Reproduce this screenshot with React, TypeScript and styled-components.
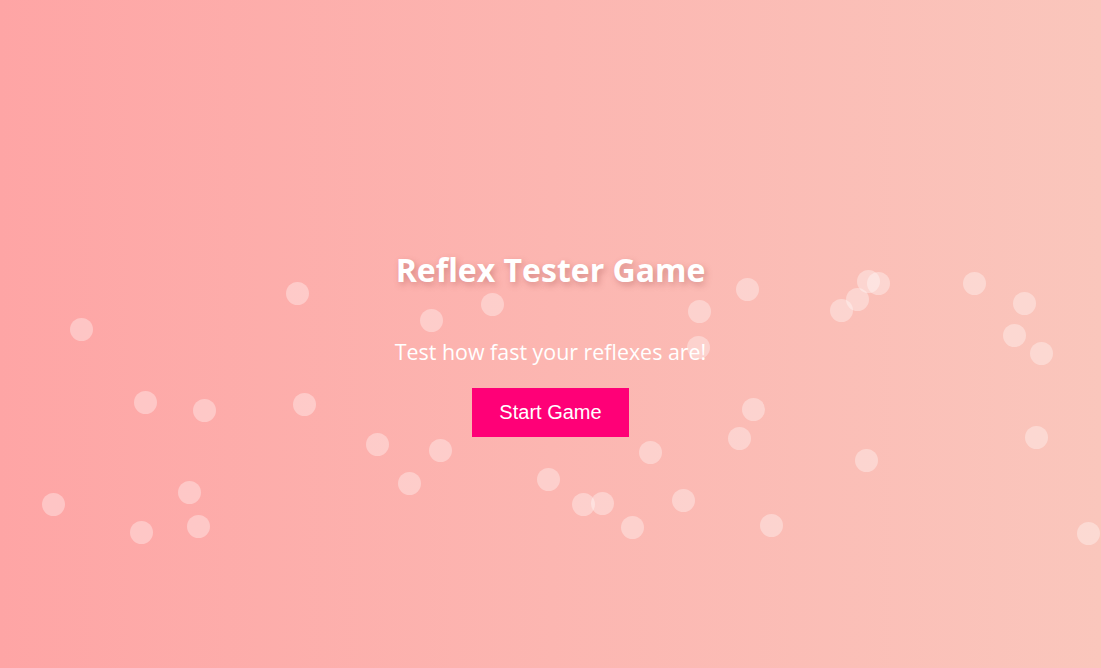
import React from "react";
import styled, { createGlobalStyle } from "styled-components";

const GlobalStyle = createGlobalStyle`
  html, body {
    margin: 0;
    padding: 0;
    height: 100%;
    overflow: hidden;
  }
  #root {
    height: 100%;
  }
`;

const Page = styled.div`
  position: relative;
  height: 100vh;
  width: 100%;
  overflow: hidden;
  background: linear-gradient(to right, #fea5a5 0%, #fcb6b1 50%, #fac6bc 100%);
  display: flex;
  flex-direction: column;
  align-items: center;
  justify-content: center;
  font-family: "Open Sans", "Liberation Sans", sans-serif;
`;

const Bubble = styled.span<{ $x: number; $y: number }>`
  position: absolute;
  left: ${(p) => p.$x - 11}px;
  top: ${(p) => p.$y - 11}px;
  width: 23px;
  height: 23px;
  border-radius: 50%;
  background: rgba(255, 255, 255, 0.35);
  pointer-events: none;
`;

const Content = styled.main`
  position: relative;
  z-index: 1;
  display: flex;
  flex-direction: column;
  align-items: center;
  padding-top: 20px;
`;

const Title = styled.h1`
  margin: 0 0 49px;
  font-family: "Open Sans", "Liberation Sans", sans-serif;
  font-weight: 700;
  font-size: 32px;
  line-height: 38px;
  color: #ffffff;
  text-shadow: 2px 3px 6px rgba(150, 60, 60, 0.35);
`;

const Subtitle = styled.p`
  margin: 0 0 22px;
  font-family: "Open Sans", "Liberation Sans", sans-serif;
  font-weight: 400;
  font-size: 21.4px;
  line-height: 28px;
  color: #ffffff;
`;

const StartButton = styled.button`
  border: none;
  background: #ff0077;
  color: #ffffff;
  font-family: "Liberation Sans", Arial, sans-serif;
  font-size: 20px;
  line-height: 23px;
  padding: 13px 27px;
  cursor: pointer;
`;

const bubbles: [number, number][] = [
  [81, 329], [297, 293], [145, 402], [204, 410], [304, 404], [53, 504],
  [141, 532], [189, 492], [198, 526], [377, 444], [431, 320], [492, 304],
  [440, 450], [409, 483], [548, 479], [583, 504], [602, 503], [632, 527],
  [650, 452], [683, 500], [699, 311], [698, 347], [747, 289], [753, 409],
  [739, 438], [771, 525], [841, 310], [857, 299], [868, 281], [878, 283],
  [866, 460], [974, 283], [1024, 303], [1014, 335], [1041, 353], [1036, 437],
  [1088, 533],
];

export default function App() {
  return (
    <>
      <GlobalStyle />
      <Page>
        {bubbles.map(([x, y], i) => (
          <Bubble key={i} $x={x} $y={y} />
        ))}
        <Content>
          <Title>Reflex Tester Game</Title>
          <Subtitle>Test how fast your reflexes are!</Subtitle>
          <StartButton>Start Game</StartButton>
        </Content>
      </Page>
    </>
  );
}
